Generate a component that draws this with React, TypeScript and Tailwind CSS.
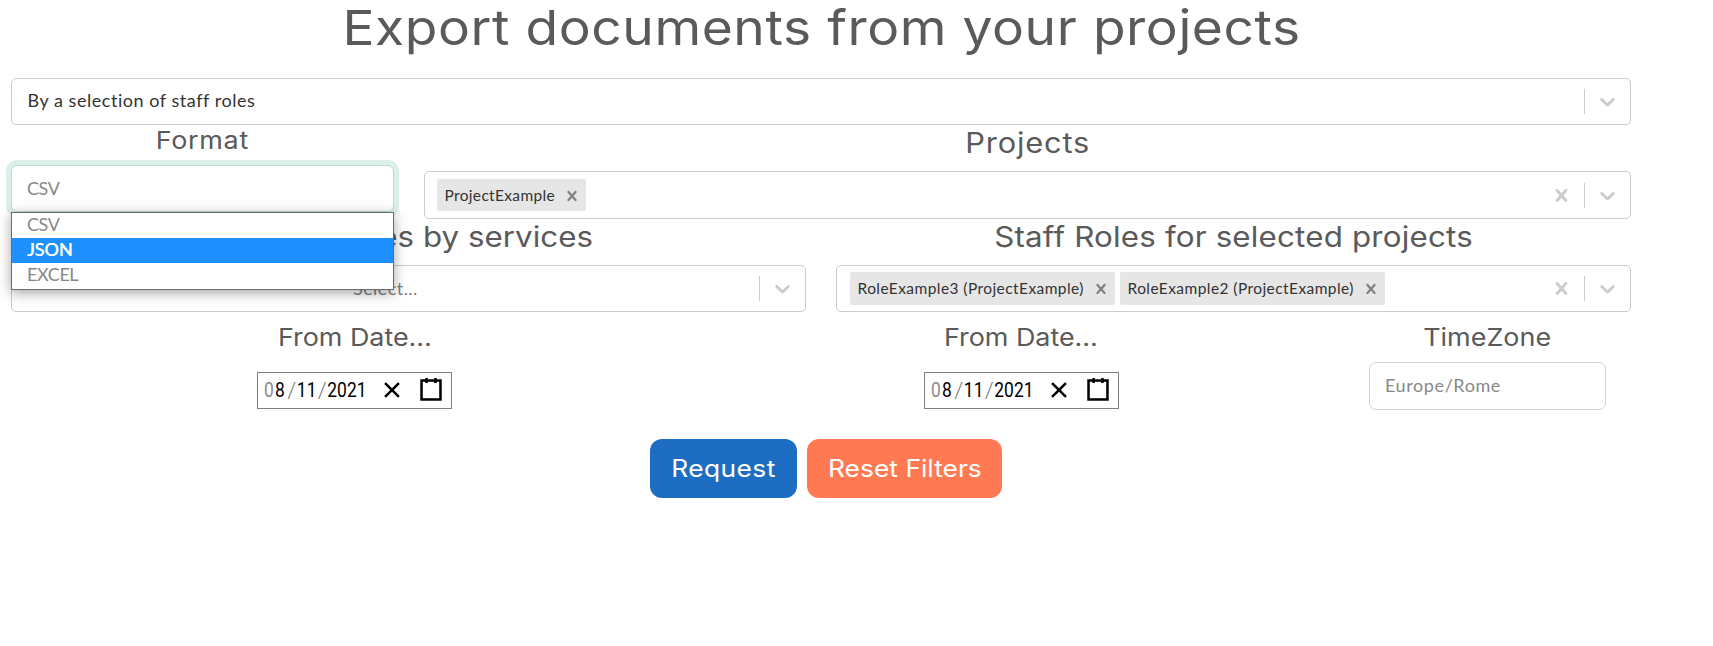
import type { ReactNode } from "react";

const HEADING = "font-['Inter',sans-serif] font-normal text-[#5a5a5a] whitespace-nowrap";
const BODY = "font-['Lato',sans-serif] whitespace-nowrap";

const CROSS =
  "M14.348 14.849c-0.469 0.469-1.229 0.469-1.697 0l-2.651-3.030-2.651 3.029c-0.469 0.469-1.229 0.469-1.697 0-0.469-0.469-0.469-1.229 0-1.697l2.758-3.15-2.759-3.152c-0.469-0.469-0.469-1.228 0-1.697s1.228-0.469 1.697 0l2.652 3.031 2.651-3.031c0.469-0.469 1.228-0.469 1.697 0s0.469 1.229 0 1.697l-2.758 3.152 2.758 3.15c0.469 0.469 0.469 1.229 0 1.698z";
const CHEVRON =
  "M4.516 7.548c0.436-0.446 1.043-0.481 1.576 0l3.908 3.747 3.908-3.747c0.533-0.481 1.141-0.446 1.574 0 0.436 0.445 0.408 1.197 0 1.615-0.406 0.418-4.695 4.502-4.695 4.502-0.217 0.223-0.502 0.335-0.787 0.335s-0.57-0.112-0.789-0.335c0 0-4.287-4.084-4.695-4.502s-0.436-1.17 0-1.615z";

function Glyph({ d, className }: { d: string; className: string }) {
  return (
    <svg viewBox="0 0 20 20" className={`shrink-0 ${className}`} fill="currentColor" aria-hidden="true">
      <path d={d} />
    </svg>
  );
}

// Stretches the letterforms slightly for a wide geometric look.
function Wide({ children, className = "origin-center" }: { children: ReactNode; className?: string }) {
  return <span className={`inline-block scale-x-110 ${className}`}>{children}</span>;
}

function SelectBox({ children, clearable = false, className = "h-[47px]" }: { children: ReactNode; clearable?: boolean; className?: string }) {
  return (
    <div className={`flex w-full items-center rounded-[5px] border border-[#cccccc] bg-white ${className}`}>
      <div className="flex min-w-0 flex-1 items-center">{children}</div>
      <div className="flex items-center text-[#cccccc]">
        {clearable && <Glyph d={CROSS} className="mx-[10px] size-[25px]" />}
        <span className="h-[25px] w-px bg-[#cccccc]" />
        <Glyph d={CHEVRON} className="mx-[10px] size-[25px]" />
      </div>
    </div>
  );
}

function Tag({ label, className }: { label: string; className: string }) {
  return (
    <div className={`flex items-center justify-between rounded-[2px] bg-[#e6e6e6] pr-1 pl-[7.5px] ${className}`}>
      <span className={`${BODY} text-[15.5px] text-[#333333]`}>{label}</span>
      <Glyph d={CROSS} className="size-5 text-[#828282]" />
    </div>
  );
}

function Slash() {
  return (
    <span className="flex w-3 justify-center">
      <span className="inline-block scale-x-130 scale-y-110 font-light text-[#808080]">/</span>
    </span>
  );
}

function DateField() {
  return (
    <div className="flex h-[37px] w-[195px] items-center border border-[#808080] bg-white font-['Roboto',sans-serif] text-[20px] leading-[33px] text-black">
      <div className="min-w-0 flex-1 pl-[6px]">
        <div className="flex w-[116px] origin-left scale-x-87">
          <span className="w-[12.6px] text-[#8c8c8c]">0</span>
          <span className="w-[13.2px]">8</span>
          <Slash />
          <span className="w-[23px]">11</span>
          <Slash />
          <span className="w-[43px]">2021</span>
        </div>
      </div>
      <svg viewBox="0 0 19 19" className="mr-[15px] mb-px size-6 shrink-0" stroke="black" strokeWidth="2" aria-hidden="true">
        <line x1="4" x2="15" y1="4" y2="15" />
        <line x1="15" x2="4" y1="4" y2="15" />
      </svg>
      <svg viewBox="0 0 19 19" className="mr-2 mb-px size-6 shrink-0" fill="none" stroke="black" strokeWidth="2" aria-hidden="true">
        <rect x="2" y="2" width="15" height="15" />
        <line x1="6" x2="6" y1="0" y2="4" />
        <line x1="13" x2="13" y1="0" y2="4" />
      </svg>
    </div>
  );
}

export default function App() {
  return (
    <main className="h-[646px] w-full bg-white pl-[11px]">
      <div className="w-[1620px]">
        <h1 className={`${HEADING} h-[78px] pl-[2px] text-center text-[48.5px] leading-[56px] tracking-[0.5px]`}>
          <Wide>Export documents from your projects</Wide>
        </h1>

        <SelectBox>
          <span className={`${BODY} pb-0.5 pl-[15.5px] text-[18px] tracking-[0.54px] text-[#333333]`}>By a selection of staff roles</span>
        </SelectBox>

        <div className="flex h-[94px] justify-between">
          <section className="flex w-[383px] flex-col">
            <h2 className={`${HEADING} h-10 text-center text-[24.5px] leading-[31px] tracking-[0.6px]`}><Wide>Format</Wide></h2>
            <div className="relative">
              <div className={`${BODY} flex h-[47px] items-center rounded-[6px] border border-[#b9ddd0] bg-white pl-[15px] text-[18px] tracking-[-0.4px] text-[#888888] ring-5 ring-[#dcf0e9]`}>
                CSV
              </div>
              <ul className={`${BODY} absolute top-[47px] left-0 z-10 h-[78px] w-full border border-[#6b6b6b] bg-white text-[18px] leading-[25px] text-[#888888] shadow-[0_3px_12px_rgba(0,0,0,0.36)]`}>
                <li className="h-[25px] pl-[15px] leading-[23px] tracking-[-0.4px]">CSV</li>
                <li className="h-[25px] bg-[#1e90ff] pl-[15px] leading-[23px] text-white [text-shadow:0.4px_0_0_white]">JSON</li>
                <li className="h-[25px] pl-[15px] leading-[23px] tracking-[-0.4px]">EXCEL</li>
              </ul>
            </div>
          </section>
          <section className="flex w-[1207px] flex-col">
            <h2 className={`${HEADING} h-[46px] text-center text-[28px] leading-[36px] tracking-[0.75px]`}><Wide>Projects</Wide></h2>
            <SelectBox clearable className="h-12">
              <div className="pl-3">
                <Tag label="ProjectExample" className="h-8 w-[149px] pt-px tracking-[0.34px]" />
              </div>
            </SelectBox>
          </section>
        </div>

        <div className="flex h-[93px] justify-between">
          <section className="w-[795px]">
            <h2 className={`${HEADING} h-[46px] pr-[213px] text-right text-[28.5px] leading-[35px]`}>
              <Wide className="origin-right">Staff Roles by services</Wide>
            </h2>
            <SelectBox>
              <span className={`${BODY} pl-[341px] text-[18px] tracking-[0.44px] text-[#808080]`}>Select...</span>
            </SelectBox>
          </section>
          <section className="w-[795px]">
            <h2 className={`${HEADING} h-[46px] pl-px text-center text-[28.5px] leading-[35px] tracking-[0.15px]`}><Wide>Staff Roles for selected projects</Wide></h2>
            <SelectBox clearable>
              <div className="flex gap-[5px] pl-[13px]">
                <Tag label="RoleExample3 (ProjectExample)" className="h-[33px] w-[265px] tracking-[0.43px]" />
                <Tag label="RoleExample2 (ProjectExample)" className="h-[33px] w-[265px] tracking-[0.43px]" />
              </div>
            </SelectBox>
          </section>
        </div>

        <div className="flex h-[127px]">
          <section className="flex w-[687px] flex-col items-center">
            <h2 className={`${HEADING} h-[60px] text-[24.5px] leading-[50px] tracking-[-0.05px]`}><Wide>From Date...</Wide></h2>
            <DateField />
          </section>
          <section className="flex w-[646px] flex-col items-center">
            <h2 className={`${HEADING} h-[60px] text-[24.5px] leading-[50px] tracking-[-0.05px]`}><Wide>From Date...</Wide></h2>
            <DateField />
          </section>
          <section className="flex flex-1 flex-col items-center">
            <h2 className={`${HEADING} h-[50px] text-[24.5px] leading-[50px]`}><Wide>TimeZone</Wide></h2>
            <div className={`${BODY} flex h-12 w-[237px] items-center rounded-[7px] border border-[#ced4da] bg-white pb-0.5 pl-[15px] text-[18px] tracking-[0.6px] text-[#888888]`}>
              Europe/Rome
            </div>
          </section>
        </div>

        <div className="flex gap-[10px] pl-[639px]">
          <button className="h-[59px] w-[147px] rounded-[12px] bg-[#1d6ec3] font-['Inter',sans-serif] text-[24px] tracking-[0.35px] text-white"><Wide>Request</Wide></button>
          <button className="h-[59px] w-[195px] rounded-[12px] bg-[#ff7a53] font-['Inter',sans-serif] text-[24px] whitespace-nowrap text-white"><Wide>Reset Filters</Wide></button>
        </div>
      </div>
    </main>
  );
}
